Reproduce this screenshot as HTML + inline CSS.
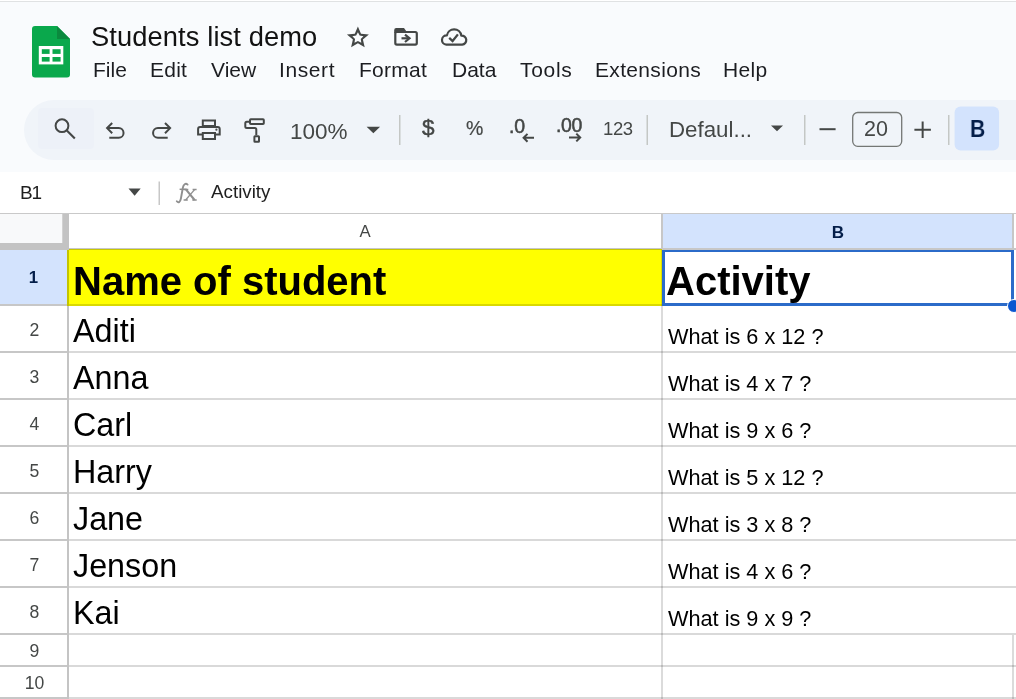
<!DOCTYPE html>
<html><head><meta charset="utf-8">
<style>
*{margin:0;padding:0;box-sizing:border-box}
html,body{width:1016px;height:699px;overflow:hidden;background:#f9fbfd;font-family:"Liberation Sans",sans-serif}
.a{position:absolute;white-space:nowrap;will-change:transform}
#topline{left:0;top:1px;width:1016px;height:1px;background:#e0e2e3}
#topwhite{left:0;top:0;width:1016px;height:1px;background:#fff}
.title{left:90.5px;top:20.5px;font-size:27.3px;color:#121212;letter-spacing:0.1px}
.menu{top:58px;font-size:21px;color:#1c1d21}
#toolbar{left:24px;top:100px;width:1040px;height:60px;border-radius:30px;background:#f0f4f9}
.tb{color:#444746}
#fbar{left:0;top:172px;width:1016px;height:41px;background:#fff}
#grid{left:0;top:213px;width:1016px;height:486px;background:#fff}
.hl{position:absolute;left:0;width:1016px;height:2px;background:#dadada}
.vl{position:absolute;top:0;width:2px;height:486px;background:#dadada}
.rn{position:absolute;left:1px;width:67px;text-align:center;font-size:17.6px;margin-top:0.5px;color:#444746}
.cell{position:absolute;font-size:32.3px;margin-top:-0.5px;color:#000}
.q{position:absolute;left:668px;font-size:21.7px;margin-top:-0.5px;color:#000}
</style></head><body>
<div class="a" id="topwhite"></div>
<div class="a" id="topline"></div>

<!-- logo -->
<svg class="a" style="left:0;top:0" width="100" height="90" viewBox="0 0 100 90">
  <path d="M35 26 H57 L70 39 V74.5 a3 3 0 0 1 -3 3 H35 a3 3 0 0 1 -3 -3 V29 a3 3 0 0 1 3 -3z" fill="#0aa84c"/>
  <path d="M57 26 L70 39 H57z" fill="#0b8a3e"/>
  <rect x="38.8" y="46" width="24.5" height="18.4" fill="#fff"/>
  <rect x="41.8" y="49.2" width="7.8" height="4.7" fill="#0aa84c"/>
  <rect x="52.5" y="49.2" width="8.1" height="4.7" fill="#0aa84c"/>
  <rect x="41.8" y="57" width="7.8" height="4.6" fill="#0aa84c"/>
  <rect x="52.5" y="57" width="8.1" height="4.6" fill="#0aa84c"/>
</svg>

<div class="a title">Students list demo</div>

<!-- star, folder, cloud -->
<svg class="a" style="left:340px;top:20px" width="140" height="35" viewBox="340 20 140 35">
  <g fill="#444746">
    <path fill-rule="evenodd" d="M357.90 26.42 L361.00 33.70 L368.88 34.39 L362.91 39.59 L364.68 47.30 L357.90 43.23 L351.12 47.30 L352.89 39.59 L346.92 34.39 L354.80 33.70Z M357.90 32.16 L359.66 35.53 L363.42 36.17 L360.75 38.89 L361.31 42.65 L357.90 40.96 L354.49 42.65 L355.05 38.89 L352.38 36.17 L356.14 35.53Z"/>
  </g>
  <g fill="none" stroke="#444746" stroke-width="2.2">
    <rect x="395.3" y="32" width="21.5" height="12.6" rx="1.5"/>
  </g>
  <path d="M394.2 30 a2 2 0 0 1 2 -2 H404 l2.5 3.5 V33 H394.2z" fill="#444746"/>
  <path d="M401.5 38.3 H409" stroke="#444746" stroke-width="2.2" fill="none"/>
  <path d="M405 34.7 L409.5 38.3 L405 42" stroke="#444746" stroke-width="2.2" fill="none"/>
  <path d="M446.3 44.6 A4.6 4.6 0 0 1 446.9 35.4 A7.3 7.3 0 0 1 461.3 35.6 A4.5 4.5 0 0 1 462.2 44.6 Z" fill="none" stroke="#444746" stroke-width="2.2" stroke-linejoin="round"/>
  <path d="M449.2 37.8 L452.6 41 L457.9 34.4" fill="none" stroke="#444746" stroke-width="2.3"/>
</svg>

<div class="a menu" style="left:93px">File</div>
<div class="a menu" style="left:150px;letter-spacing:0.25px">Edit</div>
<div class="a menu" style="left:211px">View</div>
<div class="a menu" style="left:278.5px;letter-spacing:0.6px">Insert</div>
<div class="a menu" style="left:359px;letter-spacing:0.25px">Format</div>
<div class="a menu" style="left:452px">Data</div>
<div class="a menu" style="left:520px;letter-spacing:0.7px">Tools</div>
<div class="a menu" style="left:595px;letter-spacing:0.33px">Extensions</div>
<div class="a menu" style="left:723px;letter-spacing:0.3px">Help</div>


<div class="a" id="toolbar"></div>
<div class="a" style="left:38px;top:107.5px;width:56px;height:40.5px;border-radius:4px;background:#edf1f8"></div>
<svg class="a" style="left:0;top:95px" width="1016" height="70" viewBox="0 95 1016 70">
  <g fill="none" stroke="#444746" stroke-width="2" stroke-linecap="butt" stroke-linejoin="miter">
    <!-- search -->
    <circle cx="62" cy="125.7" r="6.4"/>
    <path d="M66.8 130.6 L74.8 138.6" stroke-width="2.1"/>
    <!-- undo -->
    <path d="M112.2 123 L107.1 128.1 L112.2 133.2"/>
    <path d="M107.5 128.1 H118.7 A4.85 4.85 0 0 1 118.7 137.8 H109.3"/>
    <!-- redo -->
    <path d="M165 123 L170.1 128.1 L165 133.2"/>
    <path d="M169.7 128.1 H157.9 A4.85 4.85 0 0 0 157.9 137.8 H167.7"/>
    <!-- print -->
    <rect x="202.8" y="120.5" width="12.2" height="5.5"/>
    <path d="M202 134.6 H198.1 V129 a2 2 0 0 1 2 -2 H217.7 a2 2 0 0 1 2 2 V134.6 H216"/>
    <rect x="202.8" y="133" width="12.2" height="6"/>
    <!-- paint format -->
    <rect x="250" y="119.3" width="13.8" height="4.8" rx="0.8"/>
    <path d="M250 121.7 H246.8 a1.5 1.5 0 0 0 -1.5 1.5 V126.5 a1.5 1.5 0 0 0 1.5 1.5 H254.8 a1.5 1.5 0 0 1 1.5 1.5 V135.2"/>
    <rect x="254.4" y="136.2" width="4.6" height="5.5" rx="0.5"/>
    <!-- dropdown arrows -->
  </g>
  <circle cx="216.4" cy="129.7" r="1.1" fill="#444746"/>
  <g fill="#444746">
    <path d="M366.6 126.8 H380.1 L373.35 133.3z"/>
    <path d="M771 125.6 H783 L777 131.3z"/>
  </g>
  <g fill="#c4c7c5">
    <rect x="399" y="115" width="1.5" height="30"/>
    <rect x="646.5" y="115" width="1.5" height="30"/>
    <rect x="804" y="115" width="1.5" height="30"/>
    <rect x="948" y="115" width="1.5" height="30"/>
  </g>
  <g stroke="#444746" stroke-width="2" fill="none">
    <path d="M534 137.8 H523.5 M527.5 133.9 L523.6 137.8 L527.5 141.7"/>
    <path d="M569 137.5 H580 M576.3 133.6 L580.2 137.5 L576.3 141.4"/>
    <path d="M819.5 129.2 H835.6"/>
    <path d="M914.4 129.8 H930.9 M922.65 121.6 V138"/>
  </g>
  <rect x="852.7" y="112.5" width="49" height="33.8" rx="5" fill="none" stroke="#747775" stroke-width="1.3"/>
  <rect x="954.6" y="106.6" width="44.5" height="43.8" rx="6" fill="#d3e3fd"/>
</svg>
<div class="a tb" style="left:290px;top:118.5px;font-size:22.5px">100%</div>
<div class="a tb" style="left:421.5px;top:115px;font-size:22.5px;-webkit-text-stroke:0.45px #444746">$</div>
<div class="a tb" style="left:466px;top:117px;font-size:19.5px;-webkit-text-stroke:0.2px #444746">%</div>
<div class="a tb" style="left:509px;top:114.5px;font-size:19.5px;-webkit-text-stroke:0.5px #444746;letter-spacing:-0.2px">.0</div>
<div class="a tb" style="left:556px;top:114px;font-size:19.5px;-webkit-text-stroke:0.5px #444746;letter-spacing:-0.4px">.00</div>
<div class="a tb" style="left:603px;top:118px;font-size:18.5px;letter-spacing:-0.4px">123</div>
<div class="a tb" style="left:669px;top:116.5px;font-size:22.3px">Defaul...</div>
<div class="a tb" style="left:863.5px;top:116.5px;font-size:21.5px">20</div>
<div class="a" style="left:969.5px;top:115px;font-size:24px;font-weight:bold;color:#041e49;transform:scaleX(0.88);transform-origin:0 0">B</div>

<div class="a" id="fbar"></div>
<div class="a" id="grid"></div>
<!-- formula bar -->
<div class="a" style="left:20px;top:181.5px;font-size:19px;color:#1f1f1f;letter-spacing:-1.2px">B1</div>
<svg class="a" style="left:0;top:172px" width="300" height="41" viewBox="0 172 300 41">
  <path d="M128.5 188.5 H140.7 L134.6 195.7z" fill="#444746"/>
  <rect x="158.5" y="181.5" width="1.5" height="23.5" fill="#c7c7c7"/>
</svg>
<svg class="a" style="left:170px;top:178px" width="32" height="30" viewBox="170 178 32 30">
  <g fill="none" stroke="#8f8f8f" stroke-linecap="round">
    <path d="M176.8 201.2 C178.3 203.2 180.2 202.4 180.9 198.5 L182.9 187.5 C183.5 184.3 185.6 182.8 187.6 184.6" stroke-width="1.9"/>
    <path d="M179.6 189.3 H186.6" stroke-width="1.5" stroke-linecap="butt"/>
    <path d="M185.9 189.4 L194.6 200" stroke-width="2.1" stroke-linecap="butt"/>
    <path d="M194.8 189.4 L185.6 200" stroke-width="1.3" stroke-linecap="butt"/>
    <path d="M183.8 189.5 H188.3 M192.6 189.5 H196.6 M183.6 200 H187.8 M192.3 200 H196.7" stroke-width="1.3" stroke-linecap="butt"/>
  </g>
</svg>
<div class="a" style="left:211px;top:181px;font-size:18.8px;color:#1f1f1f">Activity</div>
<div class="a" style="left:0;top:213px;width:1016px;height:1px;background:#c9c9c9"></div>

<!-- grid -->
<div class="a" style="left:0;top:214px;width:62px;height:29px;background:#f8f9fa"></div>
<div class="a" style="left:663px;top:214px;width:349px;height:34px;background:#d3e3fd"></div>
<div class="a" style="left:0;top:250px;width:67px;height:54px;background:#d3e3fd"></div>
<div class="a" style="left:67px;top:249px;width:595px;height:57px;background:#ffff00"></div>
<!-- freeze bars -->
<div class="a" style="left:62px;top:214px;width:1px;height:29px;background:#d2d2d2"></div>
<div class="a" style="left:63px;top:214px;width:6px;height:36px;background:#c3c3c3"></div>
<div class="a" style="left:0;top:243px;width:69px;height:7px;background:#c3c3c3"></div>
<!-- header lines -->
<div class="a" style="left:69px;top:248px;width:947px;height:2px;background:rgba(0,0,0,0.22)"></div>
<div class="a" style="left:661px;top:214px;width:2px;height:34px;background:#c7c7c7"></div>
<div class="a" style="left:1012px;top:214px;width:2px;height:34px;background:#c7c7c7"></div>
<!-- row lines -->
<div class="a" style="left:67px;top:250px;width:2px;height:449px;background:rgba(0,0,0,0.23)"></div>
<div class="a" style="left:661px;top:250px;width:2px;height:449px;background:rgba(0,0,0,0.14)"></div>
<div class="a" style="left:1012px;top:635px;width:2px;height:64px;background:rgba(0,0,0,0.14)"></div>
<div class="a" style="left:0;top:304px;width:67px;height:2px;background:#c7c7c7"></div>
<div class="a" style="left:69px;top:304px;width:947px;height:2px;background:rgba(0,0,0,0.15)"></div>
<div class="a" style="left:0;top:351px;width:67px;height:2px;background:#c7c7c7"></div>
<div class="a" style="left:69px;top:351px;width:947px;height:2px;background:rgba(0,0,0,0.15)"></div>
<div class="a" style="left:0;top:398px;width:67px;height:2px;background:#c7c7c7"></div>
<div class="a" style="left:69px;top:398px;width:947px;height:2px;background:rgba(0,0,0,0.15)"></div>
<div class="a" style="left:0;top:445px;width:67px;height:2px;background:#c7c7c7"></div>
<div class="a" style="left:69px;top:445px;width:947px;height:2px;background:rgba(0,0,0,0.15)"></div>
<div class="a" style="left:0;top:492px;width:67px;height:2px;background:#c7c7c7"></div>
<div class="a" style="left:69px;top:492px;width:947px;height:2px;background:rgba(0,0,0,0.15)"></div>
<div class="a" style="left:0;top:539px;width:67px;height:2px;background:#c7c7c7"></div>
<div class="a" style="left:69px;top:539px;width:947px;height:2px;background:rgba(0,0,0,0.15)"></div>
<div class="a" style="left:0;top:586px;width:67px;height:2px;background:#c7c7c7"></div>
<div class="a" style="left:69px;top:586px;width:947px;height:2px;background:rgba(0,0,0,0.15)"></div>
<div class="a" style="left:0;top:633px;width:67px;height:2px;background:#c7c7c7"></div>
<div class="a" style="left:69px;top:633px;width:947px;height:2px;background:rgba(0,0,0,0.15)"></div>
<div class="a" style="left:0;top:665px;width:67px;height:2px;background:#c7c7c7"></div>
<div class="a" style="left:69px;top:665px;width:947px;height:2px;background:rgba(0,0,0,0.15)"></div>
<div class="a" style="left:0;top:697px;width:67px;height:2px;background:#c7c7c7"></div>
<div class="a" style="left:69px;top:697px;width:947px;height:2px;background:rgba(0,0,0,0.15)"></div>
<div class="a" style="left:0;top:216px;width:1016px;text-align:center;font-size:16px;color:#444746;left:340px;width:50px;top:222px;font-size:16.8px">A</div>
<div class="a" style="left:813px;top:222.5px;width:50px;text-align:center;font-size:17px;font-weight:bold;color:#041e49">B</div>
<div class="a" style="left:0px;top:267.5px;width:67px;text-align:center;font-size:16.8px;font-weight:bold;color:#041e49">1</div>
<div class="a rn" style="top:319.5px">2</div>
<div class="a rn" style="top:366.5px">3</div>
<div class="a rn" style="top:413.5px">4</div>
<div class="a rn" style="top:460.5px">5</div>
<div class="a rn" style="top:507.5px">6</div>
<div class="a rn" style="top:554.5px">7</div>
<div class="a rn" style="top:601.5px">8</div>
<div class="a rn" style="top:640px">9</div>
<div class="a rn" style="top:672px">10</div>
<div class="a" style="left:73px;top:259px;font-size:40px;font-weight:bold;color:#000">Name of student</div>
<div class="a" style="left:666px;top:258.5px;font-size:40px;font-weight:bold;color:#000">Activity</div>
<div class="a cell" style="left:73px;top:313px">Aditi</div>
<div class="a q" style="top:324px">What is 6 x 12 ?</div>
<div class="a cell" style="left:73px;top:360px">Anna</div>
<div class="a q" style="top:371px">What is 4 x 7 ?</div>
<div class="a cell" style="left:73px;top:407px">Carl</div>
<div class="a q" style="top:418px">What is 9 x 6 ?</div>
<div class="a cell" style="left:73px;top:454px">Harry</div>
<div class="a q" style="top:465px">What is 5 x 12 ?</div>
<div class="a cell" style="left:73px;top:501px">Jane</div>
<div class="a q" style="top:512px">What is 3 x 8 ?</div>
<div class="a cell" style="left:73px;top:548px">Jenson</div>
<div class="a q" style="top:559px">What is 4 x 6 ?</div>
<div class="a cell" style="left:73px;top:595px">Kai</div>
<div class="a q" style="top:606px">What is 9 x 9 ?</div>
<!-- selection -->
<div class="a" style="left:662px;top:250px;width:352px;height:56px;border:3px solid #2b6bc9;border-top-width:2px"></div>
<div class="a" style="left:1007px;top:299px;width:14px;height:14px;border-radius:50%;background:#0b57d0;border:1.3px solid #fff"></div>

</body></html>
